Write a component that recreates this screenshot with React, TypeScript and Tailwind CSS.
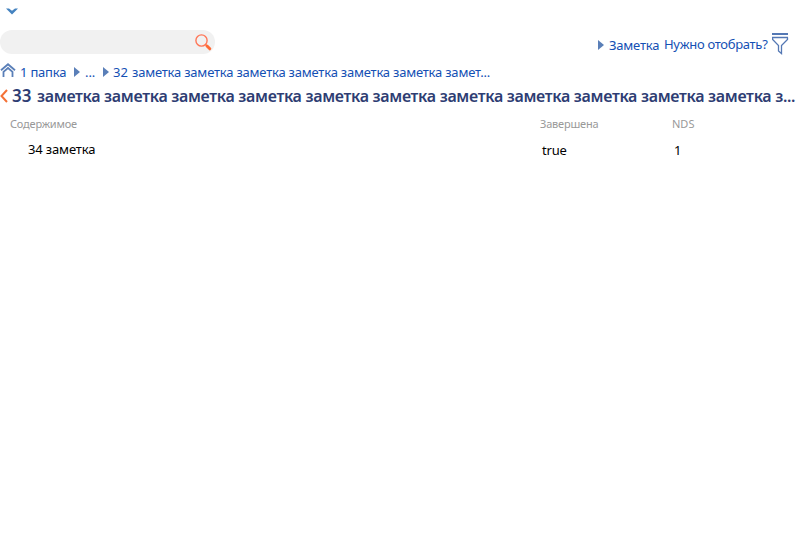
function Triangle() {
  return (
    <svg className="shrink-0" width="6" height="10" viewBox="0 0 6 10">
      <path d="M0 0L6 5L0 10Z" fill="#5a7fb8" />
    </svg>
  );
}

function SearchIcon() {
  return (
    <svg width="17" height="17" viewBox="0 0 17 17" fill="none">
      <circle cx="6.5" cy="6.5" r="5.6" stroke="#ff7657" strokeWidth="1.4" />
      <path d="M10.6 10.6L12 12" stroke="#ff7043" strokeWidth="1.4" />
      <path d="M12 12L14.8 14.8" stroke="#ff6a35" strokeWidth="3" strokeLinecap="round" />
    </svg>
  );
}

function HomeIcon() {
  return (
    <svg className="shrink-0" width="16" height="15" viewBox="0 0 16 15" fill="none" stroke="#5a7fb8" strokeWidth="1.8">
      <path d="M1 7.3L8 1.2L15 7.3" />
      <path d="M3.5 14V8.8L8 5L12.5 8.8V14" />
    </svg>
  );
}

function FilterIcon() {
  return (
    <svg className="shrink-0" width="17" height="22" viewBox="0 0 17 22" fill="none" stroke="#5478b4">
      <path d="M0 1H16" strokeWidth="2" />
      <path d="M0 4.5H16M0.6 4.5V6.5L6.5 12.5V18L9.5 20.5V12.5L15.5 6.5V4.5" strokeWidth="1.3" />
    </svg>
  );
}

const heading = "заметка ".repeat(11) + "з...";
const parent = "заметка ".repeat(6) + "замет...";

export default function App() {
  return (
    <div className="flex h-[550px] w-[800px] flex-col overflow-hidden bg-white font-['Noto_Sans',sans-serif] text-[13px] leading-[20px] whitespace-nowrap text-[#1450b4]">
      <div className="flex h-[30px] pt-[8px] pl-[6px]">
        <svg width="12" height="7" viewBox="0 0 12 7">
          <path d="M0 0.5L3 0.5L6 2.7L9 0.5L12 0.5L6 6.5Z" fill="#4583c0" />
        </svg>
      </div>
      <div className="flex h-[32px] justify-between">
        <div className="flex h-[24px] w-[215px] justify-end rounded-full bg-[#f1f1f1] pt-[4px] pr-[3px]">
          <SearchIcon />
        </div>
        <div className="flex pt-[3px] pr-[11px]">
          <div className="flex h-[20px] w-[66px] pt-[2px]">
            <div className="w-[11px] pt-[5px]"><Triangle /></div>
            <span className="tracking-[-0.2px]">Заметка</span>
          </div>
          <div className="w-[108px] pt-px tracking-[-0.3px]">Нужно отобрать?</div>
          <FilterIcon />
        </div>
      </div>
      <div className="flex h-[22px]">
        <div className="w-[20px] pt-px"><HomeIcon /></div>
        <span className="w-[54px] tracking-[-0.2px]">1 папка</span>
        <div className="w-[11px] pt-[5px]"><Triangle /></div>
        <span className="w-[18px] tracking-[-0.1px]">...</span>
        <div className="w-[10px] pt-[5px]"><Triangle /></div>
        <span className="w-[19px]">32</span>
        <span className="tracking-[-0.21px]">{parent}</span>
      </div>
      <div className="flex h-[31px]">
        <svg className="mt-[5px] shrink-0" width="12" height="14" viewBox="0 0 12 14" fill="none">
          <path d="M7 1L1.5 7L7 13" stroke="#f47136" strokeWidth="2" />
        </svg>
        <h1 className="flex text-[16px] leading-[24px] font-semibold tracking-[-0.32px] text-[#2e3d73]">
          <span className="w-[25px] text-[17px] tracking-normal">33</span>
          <span>{heading}</span>
        </h1>
      </div>
      <div className="flex h-[24px] pl-[10px] text-[11px] leading-[18px] text-[#999999]">
        <span className="w-[530px] tracking-[-0.2px]">Содержимое</span>
        <span className="w-[132px] tracking-[-0.2px]">Завершена</span>
        <span>NDS</span>
      </div>
      <div className="flex pl-[28px] text-black">
        <span className="w-[514px] tracking-[-0.15px]">34 заметка</span>
        <span className="w-[132px] pt-px tracking-[-0.2px]">true</span>
        <span className="pt-px">1</span>
      </div>
    </div>
  );
}
